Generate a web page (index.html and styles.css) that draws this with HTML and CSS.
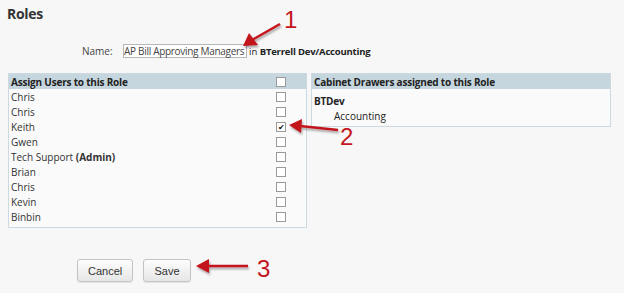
FILE: index.html
```html
<!DOCTYPE html>
<html lang="en">
<head>
    <meta charset="UTF-8">
    <title>Roles</title>
    <link rel="stylesheet" href="styles.css">
</head>
<body>

    <h1 class="title">Roles</h1>

    <!-- Role name -->
    <div class="name-row">
        <span class="name-label">Name:</span>
        <div class="name-box">AP Bill Approving Managers</div>
        <span class="scope">in <b>BTerrell Dev/Accounting</b></span>
    </div>

    <div class="panels">
        <!-- Users -->
        <div class="panel users">
            <div class="panel-head">
                <span>Assign Users to this Role</span>
                <span class="box"></span>
            </div>
            <div class="user-row"><span>Chris</span><span class="box"></span></div>
            <div class="user-row"><span>Chris</span><span class="box"></span></div>
            <div class="user-row"><span>Keith</span><span class="box checked">&#10004;</span></div>
            <div class="user-row"><span>Gwen</span><span class="box"></span></div>
            <div class="user-row"><span>Tech Support <b>(Admin)</b></span><span class="box"></span></div>
            <div class="user-row"><span>Brian</span><span class="box"></span></div>
            <div class="user-row"><span>Chris</span><span class="box"></span></div>
            <div class="user-row"><span>Kevin</span><span class="box"></span></div>
            <div class="user-row"><span>Binbin</span><span class="box"></span></div>
        </div>

        <!-- Drawers -->
        <div class="panel drawers">
            <div class="panel-head"><span>Cabinet Drawers assigned to this Role</span></div>
            <div class="drawer-list">
                <div class="cabinet">BTDev</div>
                <div class="drawer">Accounting</div>
            </div>
        </div>
    </div>

    <div class="actions">
        <button class="btn cancel">Cancel</button>
        <button class="btn">Save</button>
    </div>

    <!-- Callout arrows drawn over the page -->
    <svg class="callouts" width="624" height="293" viewBox="0 0 624 293">
        <defs>
            <filter id="shadow" x="-20%" y="-20%" width="140%" height="140%">
                <feDropShadow dx="1" dy="2" stdDeviation="1.2" flood-color="#000" flood-opacity="0.35"/>
            </filter>
        </defs>
        <g fill="#c3161c" stroke="#c3161c" filter="url(#shadow)">
            <line x1="280" y1="24" x2="252" y2="40" stroke-width="2.5"/>
            <polygon points="243,46 249,33 258,45" stroke="none"/>
            <line x1="338" y1="130" x2="300" y2="126" stroke-width="2.5"/>
            <polygon points="289,125 302,119 301,133" stroke="none"/>
            <line x1="248" y1="266" x2="208" y2="266" stroke-width="2.5"/>
            <polygon points="196,266 209,259 209,273" stroke="none"/>
        </g>
        <g class="callout-num" fill="#c3161c">
            <text x="284" y="28">1</text>
            <text x="340" y="145">2</text>
            <text x="257" y="277">3</text>
        </g>
    </svg>

</body>
</html>
```

FILE: styles.css
```css
* {
    margin: 0;
    padding: 0;
    box-sizing: border-box;
}
body {
    font-family: "Open Sans", Arial, sans-serif;
    font-size: 10px;
    color: #222;
    background-color: #f7f7f7;
    width: 624px;
    height: 293px;
    position: relative;
    overflow: hidden;
    padding: 5px 0 0 7px;
}
.title {
    font-size: 14px;
    font-weight: bold;
    color: #333;
    letter-spacing: -0.3px;
    line-height: 18px;
}
/* Name row */
.name-row {
    display: flex;
    align-items: center;
    margin: 21px 0 0 75px;
    height: 14px;
}
.name-label {
    color: #444;
    width: 41px;
}
.name-box {
    width: 124px;
    height: 14px;
    border: 1px solid #b8b8b8;
    background: #fff;
    white-space: nowrap;
    line-height: 12px;
    color: #444;
    letter-spacing: -0.3px;
}
.scope {
    margin-left: 2px;
    font-size: 9.5px;
}
.scope b {
    letter-spacing: -0.2px;
}
/* Panels */
.panels {
    display: flex;
    gap: 4px;
    margin: 15px 0 0 1px;
    align-items: flex-start;
}
.panel {
    border: 1px solid #cdd9e0;
    background: #fafafa;
}
.users {
    width: 299px;
    padding-bottom: 3px;
}
.drawers {
    width: 300px;
}
.panel-head {
    background: #c5d6de;
    height: 15px;
    display: flex;
    justify-content: space-between;
    align-items: center;
    padding: 0 20px 0 2px;
    font-weight: bold;
    letter-spacing: -0.2px;
}
.user-row {
    height: 15px;
    display: flex;
    justify-content: space-between;
    align-items: center;
    padding: 0 20px 0 2px;
    color: #333;
}
.user-row b {
    font-weight: bold;
}
.box {
    width: 10px;
    height: 10px;
    border: 1px solid #9a9a9a;
    background: #fff;
    font-size: 8px;
    line-height: 8px;
    text-align: center;
    color: #111;
}
.drawer-list {
    padding: 5px 2px 2px;
    line-height: 15px;
    color: #222;
}
.cabinet {
    font-weight: bold;
    letter-spacing: -0.2px;
}
.drawer {
    padding-left: 20px;
}
/* Buttons */
.actions {
    display: flex;
    gap: 10px;
    margin: 31px 0 0 70px;
}
.btn {
    height: 23px;
    padding: 0 10px;
    font-family: "Liberation Sans", Arial, sans-serif;
    font-size: 11px;
    color: #333;
    background: linear-gradient(#fdfdfd, #e6e6e6);
    border: 1px solid #c4c4c4;
    border-radius: 3px;
    box-shadow: 0 1px 1px rgba(0, 0, 0, 0.08);
}
.cancel {
    width: 56px;
}
.btn:not(.cancel) {
    width: 48px;
}
/* Callouts */
.callouts {
    position: absolute;
    left: 0;
    top: 0;
    pointer-events: none;
}
.callout-num text {
    font-family: "Liberation Sans", Arial, sans-serif;
    font-size: 24px;
}
```
